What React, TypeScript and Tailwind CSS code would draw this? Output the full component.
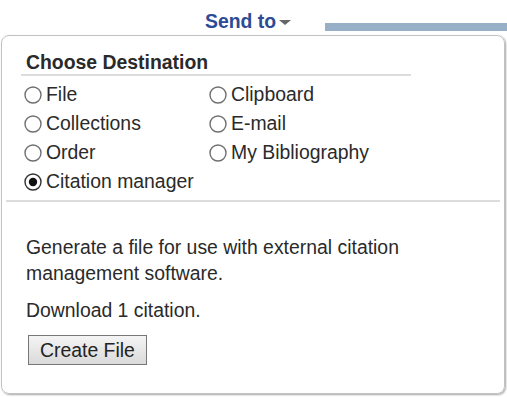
import React from "react"

const options = [
  { label: "File", checked: false },
  { label: "Clipboard", checked: false },
  { label: "Collections", checked: false },
  { label: "E-mail", checked: false },
  { label: "Order", checked: false },
  { label: "My Bibliography", checked: false },
  { label: "Citation manager", checked: true },
]

function Radio({ checked }: { checked: boolean }) {
  return (
    <svg width="18" height="18" viewBox="0 0 18 18" aria-hidden="true" className="shrink-0">
      <circle cx="9" cy="9" r="8" fill="#fff" stroke={checked ? "#333" : "#707070"} strokeWidth="1.4" />
      {checked && <circle cx="9" cy="9" r="4.2" fill="#111" />}
    </svg>
  )
}

export default function App() {
  return (
    <div className="h-[397px] w-[507px] overflow-hidden bg-white font-['Liberation_Sans',Arial,sans-serif] text-[19.4px] text-[#2a2a2a]">
      {/* Send to bar */}
      <div className="flex h-[35px] items-start">
        <div className="ml-[205px] mt-[10px] flex items-center leading-[22px]">
          <span className="font-bold text-[#2d4b94]">Send to</span>
          <span className="ml-[3px] mt-[2px] h-0 w-0 border-x-[6px] border-t-[5px] border-x-transparent border-t-[#666]" />
        </div>
        <div className="ml-[34px] mt-[23px] h-[8px] flex-1 bg-[#97b0c8]" />
      </div>

      {/* Panel */}
      <div className="ml-[1px] h-[359px] w-[504px] rounded-[8px] border border-[#c2c2c2] shadow-[1px_1px_2px_rgba(0,0,0,0.35)]">
        <div className="ml-[19px] mt-[15px] w-[390px] border-b-2 border-[#dcdcdc] pb-[1px]">
          <h3 className="pl-[5px] font-bold leading-[22px]">Choose Destination</h3>
        </div>

        <div className="ml-[22px] mt-[4px] grid grid-cols-[185px_auto]">
          {options.map((o) => (
            <label key={o.label} className="flex h-[29px] items-center gap-[4px] leading-[29px]">
              <Radio checked={o.checked} />
              <span>{o.label}</span>
            </label>
          ))}
        </div>

        <div className="ml-[4px] mt-[4px] h-[2px] w-[494px] bg-[#dcdcdc]" />

        <div className="ml-[24px] mr-[40px] mt-[32px] leading-[26px]">
          <p>Generate a file for use with external citation management software.</p>
          <p className="mt-[11px]">Download 1 citation.</p>
          <button className="ml-[2px] mt-[12px] border border-[#777] bg-gradient-to-b from-[#f4f4f4] to-[#dadada] px-[11px] py-[3px] leading-[22px] text-[#222]">
            Create File
          </button>
        </div>
      </div>
    </div>
  )
}
